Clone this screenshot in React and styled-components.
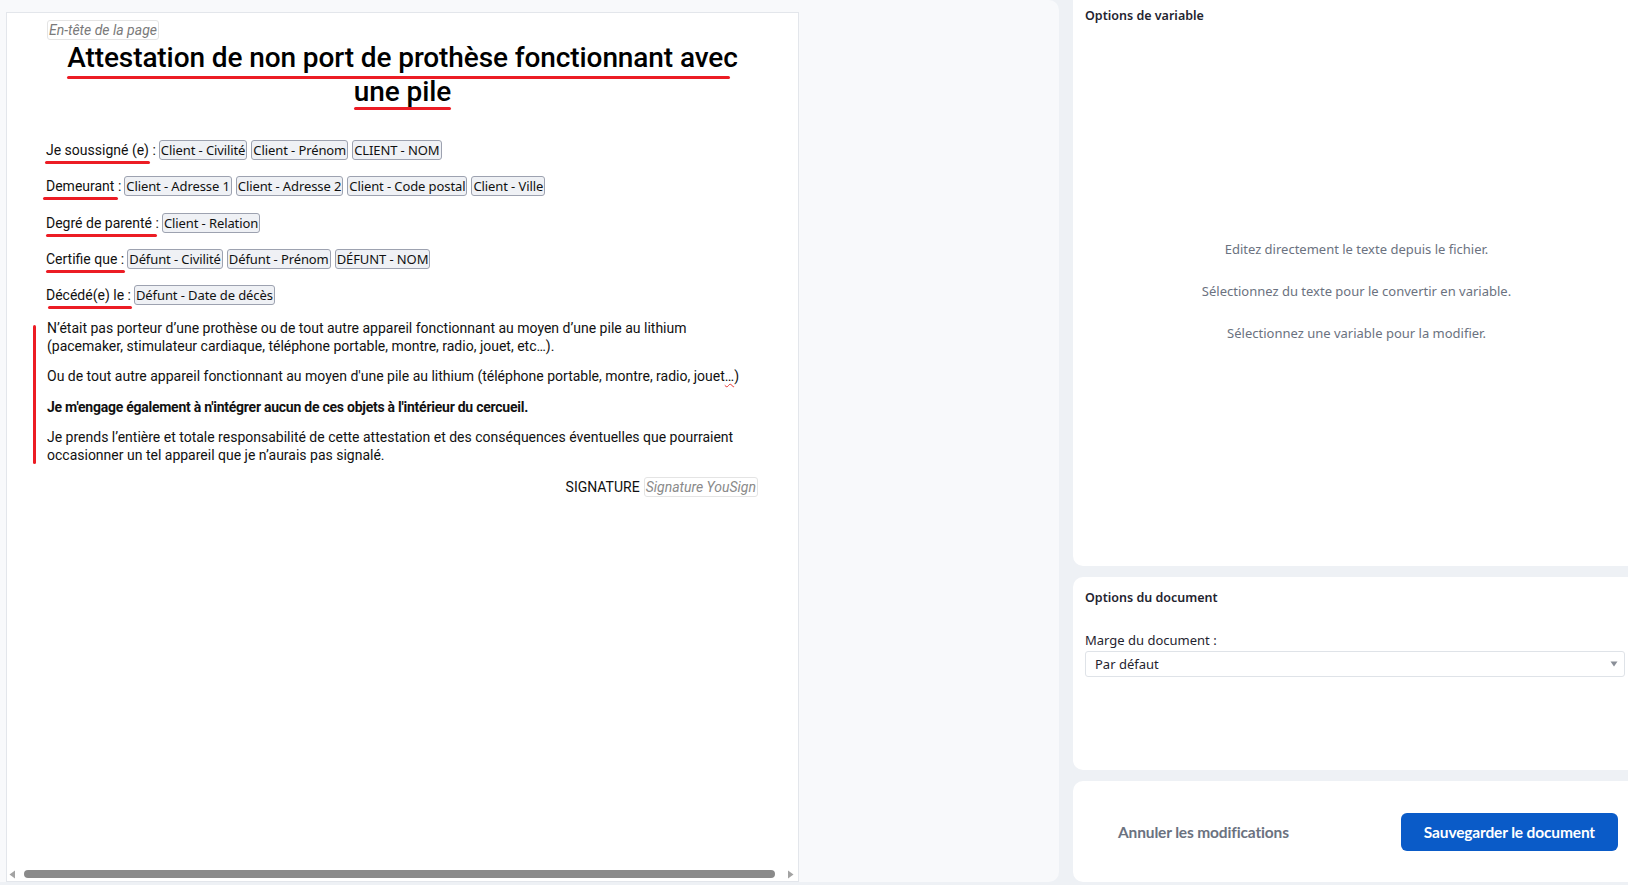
import React from "react";
import styled, { createGlobalStyle } from "styled-components";

const Global = createGlobalStyle`
  html, body { margin: 0; padding: 0; }
  body {
    background: #eef1f5;
    font-family: Roboto, "Noto Sans", sans-serif;
    overflow: hidden;
  }
  * { box-sizing: border-box; }
`;

const Layout = styled.div`
  display: grid;
  grid-template-columns: 1059px 1fr;
  column-gap: 14px;
  width: 1628px;
  height: 885px;
`;

const LeftPanel = styled.div`
  background: #f8f9fb;
  border-radius: 0 10px 10px 0;
  height: 882px;
  padding: 12px 0 0 6px;
`;

const DocBox = styled.div`
  width: 793px;
  height: 870px;
  background: #fff;
  border: 1px solid #e3e6eb;
  display: flex;
  flex-direction: column;
`;

const DocContent = styled.div`
  flex: 1;
  padding: 7px 40px 0 40px;
  color: #111;
  font-size: 14px;
`;

const HeaderField = styled.span`
  display: inline-block;
  font-style: italic;
  color: #7a7a7a;
  font-size: 14px;
  line-height: 18px;
  border: 1px solid #e4e4e4;
  border-radius: 3px;
  padding: 0 1px;
`;

const Title = styled.h1`
  margin: 1px 0 0;
  text-align: center;
  font-size: 28px;
  font-weight: 500;
  line-height: 34px;
  color: #000;
  letter-spacing: -0.1px;
`;

const Marked = styled.span`
  position: relative;
  display: ${(p) => (p.$block ? "table" : "inline-block")};
  margin: ${(p) => (p.$block ? "0 auto" : "0")};
  &::after {
    content: "";
    position: absolute;
    left: ${(p) => p.$l ?? -1}px;
    right: ${(p) => p.$r ?? -2}px;
    bottom: ${(p) => p.$b ?? -4}px;
    height: ${(p) => p.$h ?? 3}px;
    background: #ec1c24;
    border-radius: 2px;
  }
`;

const Rows = styled.div`
  margin-top: 31px;
  display: flex;
  flex-direction: column;
  gap: 16.3px;
`;

const Row = styled.div`
  display: flex;
  align-items: center;
  gap: 4px;
  height: 20px;
  line-height: 20px;
  white-space: nowrap;
`;

const Label = styled.span`
  font-size: 14px;
  color: #111;
  margin-left: -1px;
  margin-right: -1px;
`;

const Chip = styled.span`
  display: inline-flex;
  align-items: center;
  height: 20px;
  padding: 0 1px;
  background: #eff1f5;
  border: 1px solid #9da2b0;
  border-radius: 3px;
  font-family: "Noto Sans", sans-serif;
  font-size: 13px;
  letter-spacing: -0.1px;
  color: #111;
`;

const Paras = styled.div`
  position: relative;
  margin-top: 15px;
  &::before {
    content: "";
    position: absolute;
    left: -14px;
    top: 5px;
    bottom: 0;
    width: 3px;
    background: #ec1c24;
    border-radius: 2px;
  }
`;

const P = styled.p`
  margin: 0 0 13px;
  font-size: 14px;
  line-height: 17.5px;
  font-weight: ${(p) => (p.$bold ? 700 : 400)};
  letter-spacing: ${(p) => (p.$bold ? "-0.25px" : "0")};
  &:last-child { margin-bottom: 0; }
`;

const Squiggle = styled.span`
  text-decoration: underline wavy #e53935;
  text-decoration-thickness: 1px;
  text-underline-offset: 2px;
`;

const SignatureRow = styled.div`
  margin-top: 13px;
  display: flex;
  justify-content: flex-end;
  align-items: center;
  gap: 4px;
  line-height: 20px;
  font-size: 14px;
`;

const SignField = styled.span`
  font-style: italic;
  color: #8a8a8a;
  border: 1px solid #e4e4e4;
  border-radius: 3px;
  padding: 0 1px;
  line-height: 18px;
`;

const ScrollBar = styled.div`
  height: 14px;
  display: flex;
  align-items: center;
  padding: 0 4px 0 2px;
  gap: 6px;
`;

const Thumb = styled.div`
  flex: 1;
  height: 8px;
  border-radius: 4px;
  background: #8a8a8a;
  margin: 0 6px 0 2px;
`;

const Arrow = ({ dir }) => (
  <svg width="7" height="9" viewBox="0 0 7 9">
    {dir === "left" ? (
      <path d="M6 0.5 L0.5 4.5 L6 8.5 Z" fill="#a3a3a3" />
    ) : (
      <path d="M1 0.5 L6.5 4.5 L1 8.5 Z" fill="#a3a3a3" />
    )}
  </svg>
);

const RightCol = styled.div`
  display: flex;
  flex-direction: column;
  gap: 11px;
  height: 883px;
`;

const Panel = styled.section`
  background: #fff;
  border-radius: ${(p) => (p.$first ? "0 0 0 10px" : "10px 0 0 10px")};
  height: ${(p) => p.$h}px;
  padding: ${(p) => p.$pad};
  flex-shrink: 0;
`;

const PanelTitle = styled.h2`
  margin: 0;
  font-family: "Noto Sans", sans-serif;
  font-size: 12.5px;
  font-weight: 600;
  line-height: 18px;
  color: #1f2430;
`;

const Hints = styled.div`
  margin-top: 215px;
  display: flex;
  flex-direction: column;
  align-items: center;
  gap: 24px;
  padding-left: 12px;
`;

const Hint = styled.p`
  margin: 0;
  font-family: "Noto Sans", sans-serif;
  font-size: 13px;
  line-height: 18px;
  color: #6b7280;
`;

const FieldLabel = styled.div`
  margin-top: 24px;
  font-family: "Noto Sans", sans-serif;
  font-size: 13px;
  line-height: 18px;
  color: #1f2430;
`;

const Select = styled.div`
  margin-top: 2px;
  height: 26px;
  border: 1px solid #dfe3e8;
  border-radius: 3px;
  display: flex;
  align-items: center;
  justify-content: space-between;
  padding: 0 6px 0 9px;
  font-family: "Noto Sans", sans-serif;
  font-size: 13px;
  color: #1f2430;
`;

const Actions = styled.div`
  display: flex;
  align-items: center;
  justify-content: space-between;
  height: 100%;
`;

const Button = styled.button`
  border: none;
  font-family: Lato, "Noto Sans", sans-serif;
  font-weight: 700;
  font-size: 15.5px;
  cursor: pointer;
  border-radius: 6px;
  height: 38px;
  padding: ${(p) => (p.$primary ? "0 23px" : "0")};
  background: ${(p) => (p.$primary ? "#0a5bc8" : "transparent")};
  color: ${(p) => (p.$primary ? "#fff" : "#6b7280")};
  letter-spacing: -0.15px;
`;

export default function App() {
  return (
    <>
      <Global />
      <Layout>
        <LeftPanel>
          <DocBox>
            <DocContent>
              <HeaderField>En-tête de la page</HeaderField>
              <Title>
                <Marked $block $b={-4} $h={3.5} $l={0} $r={8}>
                  Attestation de non port de prothèse fonctionnant avec
                </Marked>
                <Marked $block $b={-1} $h={3.5} $l={0} $r={0}>
                  une pile
                </Marked>
              </Title>

              <Rows>
                <Row>
                  <Label>
                    <Marked $r={-1}>Je soussigné (e)</Marked> :
                  </Label>
                  <Chip>Client - Civilité</Chip>
                  <Chip>Client - Prénom</Chip>
                  <Chip>CLIENT - NOM</Chip>
                </Row>
                <Row>
                  <Label>
                    <Marked $l={-3} $r={-4}>Demeurant</Marked> :
                  </Label>
                  <Chip>Client - Adresse 1</Chip>
                  <Chip>Client - Adresse 2</Chip>
                  <Chip>Client - Code postal</Chip>
                  <Chip>Client - Ville</Chip>
                </Row>
                <Row>
                  <Label>
                    <Marked $l={0} $r={-5}>Degré de parenté</Marked> :
                  </Label>
                  <Chip>Client - Relation</Chip>
                </Row>
                <Row>
                  <Label>
                    <Marked $l={0} $r={-8}>Certifie que</Marked> :
                  </Label>
                  <Chip>Défunt - Civilité</Chip>
                  <Chip>Défunt - Prénom</Chip>
                  <Chip>DÉFUNT - NOM</Chip>
                </Row>
                <Row>
                  <Label>
                    <Marked $l={2} $r={-8}>Décédé(e) le</Marked> :
                  </Label>
                  <Chip>Défunt - Date de décès</Chip>
                </Row>
              </Rows>

              <Paras>
                <P>
                  N’était pas porteur d’une prothèse ou de tout autre appareil
                  fonctionnant au moyen d’une pile au lithium (pacemaker,
                  stimulateur cardiaque, téléphone portable, montre, radio,
                  jouet, etc…).
                </P>
                <P>
                  Ou de tout autre appareil fonctionnant au moyen d'une pile au
                  lithium (téléphone portable, montre, radio, jouet
                  <Squiggle>…</Squiggle>)
                </P>
                <P $bold>
                  Je m'engage également à n'intégrer aucun de ces objets à
                  l'intérieur du cercueil.
                </P>
                <P>
                  Je prends l’entière et totale responsabilité de cette
                  attestation et des conséquences éventuelles que pourraient
                  occasionner un tel appareil que je n’aurais pas signalé.
                </P>
              </Paras>

              <SignatureRow>
                <span>SIGNATURE</span>
                <SignField>Signature YouSign</SignField>
              </SignatureRow>
            </DocContent>
            <ScrollBar>
              <Arrow dir="left" />
              <Thumb />
              <Arrow dir="right" />
            </ScrollBar>
          </DocBox>
        </LeftPanel>

        <RightCol>
          <Panel $first $h={566} $pad="7px 12px 0 12px">
            <PanelTitle>Options de variable</PanelTitle>
            <Hints>
              <Hint>Editez directement le texte depuis le fichier.</Hint>
              <Hint>Sélectionnez du texte pour le convertir en variable.</Hint>
              <Hint>Sélectionnez une variable pour la modifier.</Hint>
            </Hints>
          </Panel>
          <Panel $h={193} $pad="12px 3px 0 12px">
            <PanelTitle>Options du document</PanelTitle>
            <FieldLabel>Marge du document :</FieldLabel>
            <Select>
              <span>Par défaut</span>
              <svg width="8" height="6" viewBox="0 0 8 6">
                <path d="M0.5 0.5 H7.5 L4 5.5 Z" fill="#8a8f98" />
              </svg>
            </Select>
          </Panel>
          <Panel $h={101} $pad="0 10px 0 45px">
            <Actions>
              <Button>Annuler les modifications</Button>
              <Button $primary>Sauvegarder le document</Button>
            </Actions>
          </Panel>
        </RightCol>
      </Layout>
    </>
  );
}
